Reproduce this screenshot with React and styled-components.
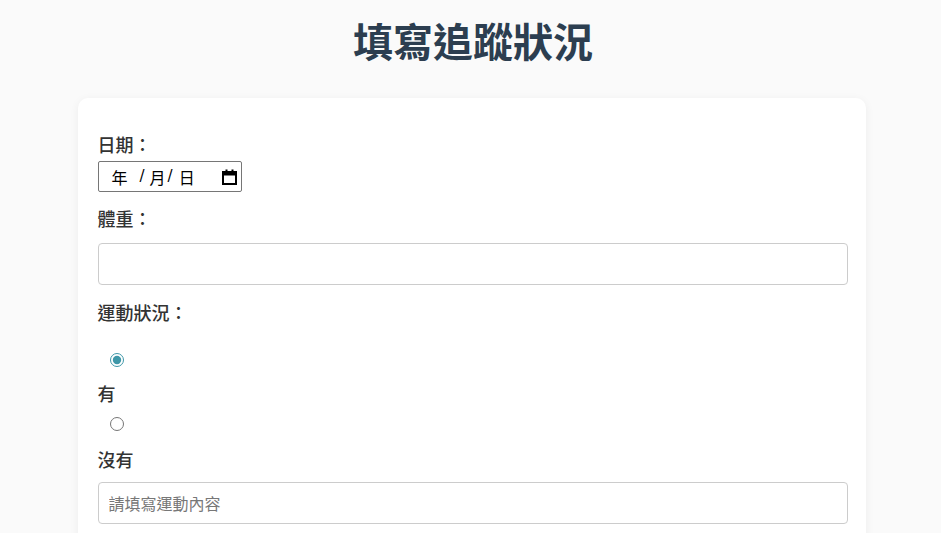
import React from 'react'
import styled, { createGlobalStyle } from 'styled-components'

const GlobalStyle = createGlobalStyle`
  html, body {
    margin: 0;
    padding: 0;
    background: #fafafa;
  }
  body {
    font-family: "Noto Sans CJK TC", "Noto Sans", sans-serif;
    color: #333;
  }
  * {
    box-sizing: border-box;
  }
`

const CalendarIcon = () => (
  <svg width="15" height="16" viewBox="0 0 15 16" fill="none">
    <rect x="1" y="3" width="13" height="12" stroke="#000" strokeWidth="2" fill="none" />
    <rect x="1" y="3" width="13" height="3.5" fill="#000" />
    <rect x="3.5" y="0.5" width="2" height="3" fill="#000" />
    <rect x="9.5" y="0.5" width="2" height="3" fill="#000" />
  </svg>
)

class App extends React.Component {
  state = {
    exercise: 'yes',
    weight: '',
    content: ''
  }

  _onExercise = e => {
    this.setState({ exercise: e.target.value })
  }

  render() {
    const { state } = this

    return (
      <Page>
        <GlobalStyle />
        <Title>填寫追蹤狀況</Title>
        <Card>
          <Label $mt={0}>日期：</Label>
          <DateField>
            <DatePart $ml={13}>年</DatePart>
            <Slash $ml={12}>/</Slash>
            <DatePart $ml={5}>月</DatePart>
            <Slash $ml={2}>/</Slash>
            <DatePart $ml={6}>日</DatePart>
            <IconSlot>
              <CalendarIcon />
            </IconSlot>
          </DateField>

          <Label $mt={13}>體重：</Label>
          <TextInput
            $mt={12}
            type="number"
            value={state.weight}
            onChange={e => this.setState({ weight: e.target.value })}
          />

          <Label $mt={14}>運動狀況：</Label>
          <Radio
            $mt={28}
            type="radio"
            name="exercise"
            value="yes"
            checked={state.exercise === 'yes'}
            onChange={this._onExercise}
          />
          <Label $mt={13}>有</Label>
          <Radio
            $mt={11}
            type="radio"
            name="exercise"
            value="no"
            checked={state.exercise === 'no'}
            onChange={this._onExercise}
          />
          <Label $mt={15}>沒有</Label>
          <TextInput
            $mt={10}
            type="text"
            placeholder="請填寫運動內容"
            value={state.content}
            onChange={e => this.setState({ content: e.target.value })}
          />
        </Card>
      </Page>
    )
  }
}

const Page = styled.div`
  display: flex;
  flex-direction: column;
  align-items: center;
  padding: 11px 0 40px 2px;
`

const Title = styled.h1`
  margin: 0 0 29px 3px;
  font-size: 40px;
  font-weight: 700;
  line-height: 58px;
  color: #2c3e50;
`

const Card = styled.form`
  width: 788px;
  display: flex;
  flex-direction: column;
  align-items: flex-start;
  padding: 33px 18px 30px 20px;
  background: #fff;
  border-radius: 10px;
  box-shadow: 0 2px 10px rgba(0, 0, 0, 0.06);
`

const Label = styled.label`
  display: block;
  margin-top: ${props => props.$mt}px;
  font-size: 18px;
  font-weight: 500;
  line-height: 26px;
  color: #333;
`

const DateField = styled.div`
  display: flex;
  align-items: center;
  width: 144px;
  height: 31px;
  margin-top: 4px;
  border: 1px solid #767676;
  border-radius: 2px;
  background: #fff;
  font-size: 16px;
  color: #000;
  cursor: text;
`

const DatePart = styled.span`
  margin-left: ${props => props.$ml}px;
  line-height: 1;
`

const Slash = styled.span`
  margin-left: ${props => props.$ml}px;
  font-family: "DejaVu Sans", sans-serif;
  font-size: 15px;
  line-height: 1;
`

const IconSlot = styled.span`
  display: flex;
  margin-left: auto;
  margin-right: 4px;
`

const TextInput = styled.input`
  width: 750px;
  height: 42px;
  margin: ${props => props.$mt}px 0 0;
  padding: 10px;
  border: 1px solid #ccc;
  border-radius: 4px;
  font-family: "Noto Sans CJK TC", "Noto Sans", sans-serif;
  font-size: 16px;
  color: #333;
  outline: none;
  appearance: textfield;

  &::placeholder {
    color: #777;
  }

  &::-webkit-inner-spin-button,
  &::-webkit-outer-spin-button {
    -webkit-appearance: none;
    margin: 0;
  }
`

const Radio = styled.input`
  display: block;
  width: 14px;
  height: 14px;
  margin: ${props => props.$mt}px 0 0 12px;
  accent-color: #3e97a8;
`

export default App
